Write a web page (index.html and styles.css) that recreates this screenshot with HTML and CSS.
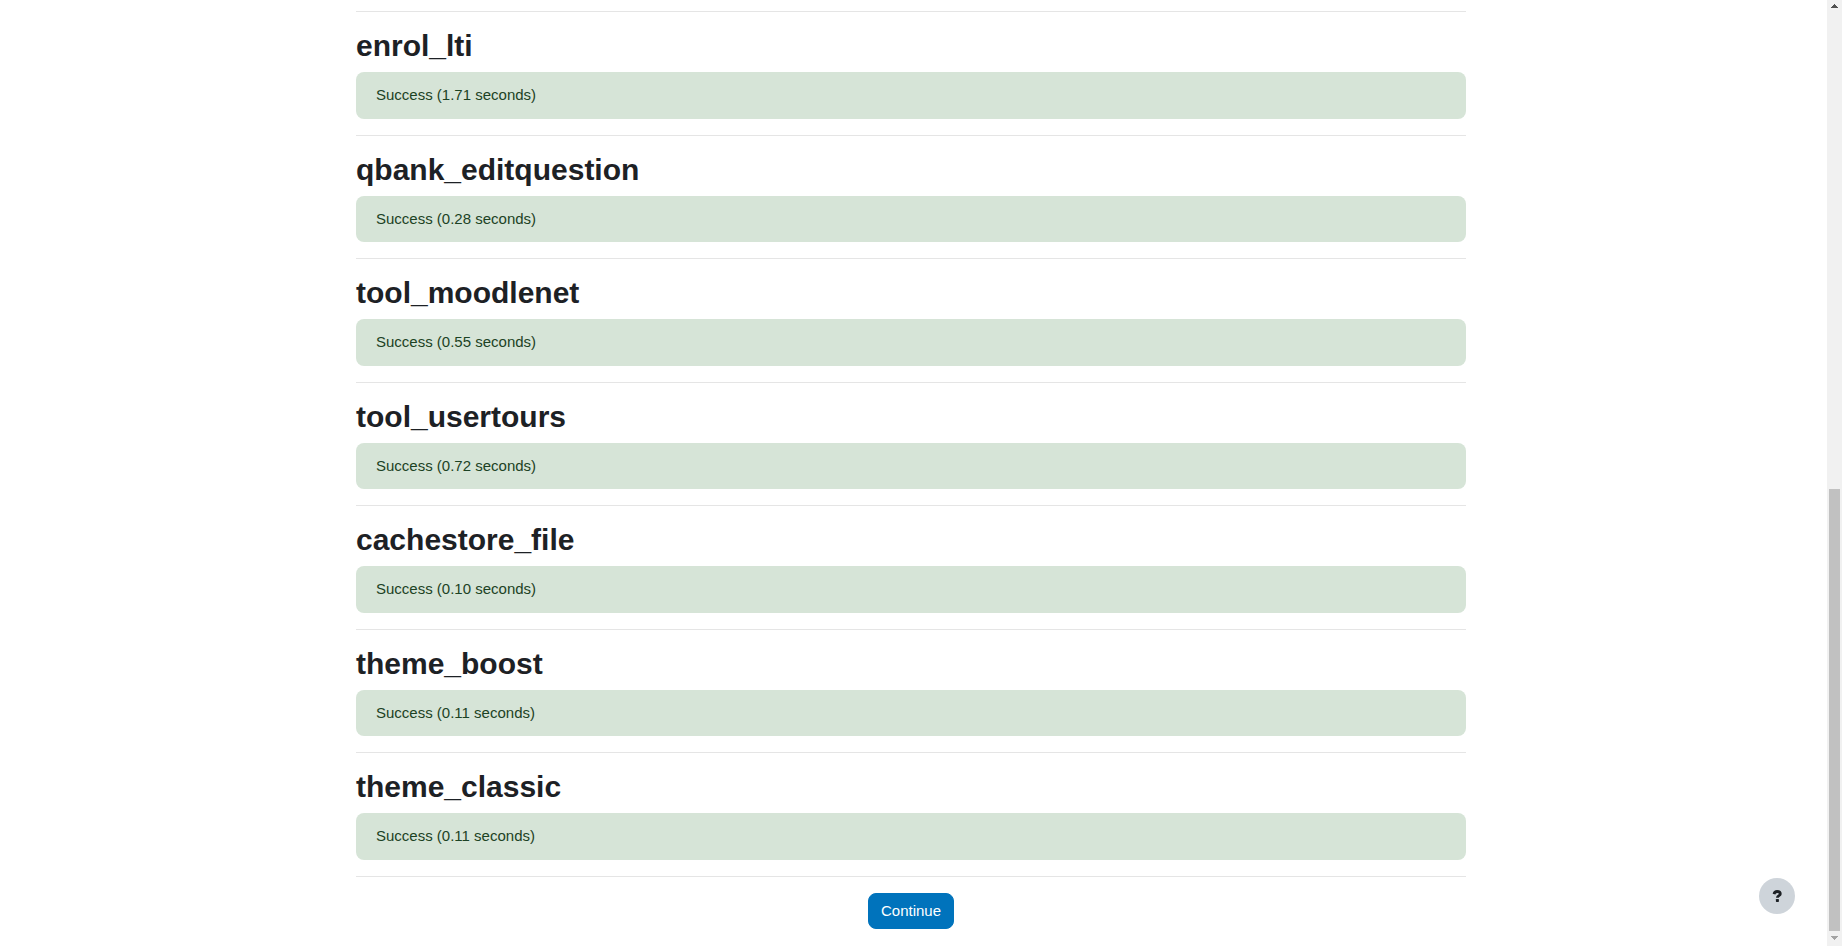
FILE: index.html
```html
<!DOCTYPE html>
<html lang="en">
<head>
    <meta charset="UTF-8">
    <meta name="viewport" content="width=device-width, initial-scale=1.0">
    <title>Upgrade</title>
    <link rel="stylesheet" href="styles.css">
</head>
<body>
    <main class="page">
        <div class="main-inner">
            <hr>
            <h2>enrol_lti</h2>
            <div class="alert-success">Success (1.71 seconds)</div>
            <hr>
            <h2>qbank_editquestion</h2>
            <div class="alert-success">Success (0.28 seconds)</div>
            <hr>
            <h2>tool_moodlenet</h2>
            <div class="alert-success">Success (0.55 seconds)</div>
            <hr>
            <h2>tool_usertours</h2>
            <div class="alert-success">Success (0.72 seconds)</div>
            <hr>
            <h2>cachestore_file</h2>
            <div class="alert-success">Success (0.10 seconds)</div>
            <hr>
            <h2>theme_boost</h2>
            <div class="alert-success">Success (0.11 seconds)</div>
            <hr>
            <h2>theme_classic</h2>
            <div class="alert-success">Success (0.11 seconds)</div>
            <hr>
            <form class="continue-form">
                <button type="submit" class="btn-primary">Continue</button>
            </form>
        </div>
    </main>

    <button type="button" class="btn-footer-popover" aria-label="Show footer">
        <svg width="10" height="12" viewBox="0 0 10 12">
            <path d="M2 4.1C2.4 2.3 3.5 1.5 5.1 1.5C7.2 1.5 8.3 2.5 8.3 3.9C8.3 5.8 5.4 5.6 5.4 7.8" fill="none" stroke="#1d2125" stroke-width="2.8"/>
            <rect x="3.9" y="8.9" width="3" height="3" rx=".6" fill="#1d2125"/>
        </svg>
    </button>

    <div class="scrollbar">
        <svg class="arrow" width="7" height="4" viewBox="0 0 7 4" shape-rendering="crispEdges">
            <path d="M3 0h1v1h1v1h1v1h1v1H0V3h1V2h1V1h1z" fill="#505050"/>
        </svg>
        <div class="track">
            <div class="thumb"></div>
        </div>
        <svg class="arrow" width="7" height="4" viewBox="0 0 7 4" shape-rendering="crispEdges">
            <path d="M0 0h7v1H6v1H5v1H4v1H3V3H2V2H1V1H0z" fill="#a3a3a3"/>
        </svg>
    </div>
</body>
</html>
```

FILE: styles.css
```css
* {
    box-sizing: border-box;
}
body {
    margin: 0;
    font-family: "Liberation Sans", Arial, sans-serif;
    font-size: 15px;
    line-height: 1.5;
    color: #1d2125;
    background-color: #fff;
}
.page {
    padding: 11px 20px 16px 0;
}
.main-inner {
    max-width: 1110px;
    margin: 0 auto;
}
hr {
    height: 1px;
    margin: 16px 0;
    border: 0;
    background-color: #e5e5e5;
}
hr:first-child {
    margin-top: 0;
}
h2 {
    margin: 0 0 8px;
    font-size: 30px;
    font-weight: bold;
    line-height: 1.2;
}
.alert-success {
    padding: 12px 20px;
    border-radius: 8px;
    background-color: #d6e4d7;
    color: #1c4224;
}
.continue-form {
    display: flex;
    justify-content: center;
}
button {
    font-family: inherit;
    font-size: inherit;
    line-height: inherit;
    cursor: pointer;
}
.btn-primary {
    padding: 6px 12px;
    border: 1px solid #0073bc;
    border-radius: 8px;
    background-color: #0073bc;
    color: #fff;
}
.btn-footer-popover {
    position: fixed;
    right: 47px;
    bottom: 32px;
    display: flex;
    align-items: center;
    justify-content: center;
    width: 36px;
    height: 36px;
    padding: 0;
    border: 0;
    border-radius: 50%;
    background-color: #ced4da;
}
/* scrollbar on the right edge */
.scrollbar {
    position: fixed;
    top: 0;
    right: 0;
    bottom: 0;
    display: flex;
    flex-direction: column;
    align-items: center;
    width: 15px;
    padding: 4px 0 6px;
    background-color: #f1f1f1;
}
.arrow {
    display: block;
    flex: none;
}
.track {
    display: flex;
    flex: 1;
    flex-direction: column;
    justify-content: flex-end;
    padding: 7px 0 5px;
}
.thumb {
    width: 11px;
    height: 48.3%;
    background-color: #c1c1c1;
}
```
